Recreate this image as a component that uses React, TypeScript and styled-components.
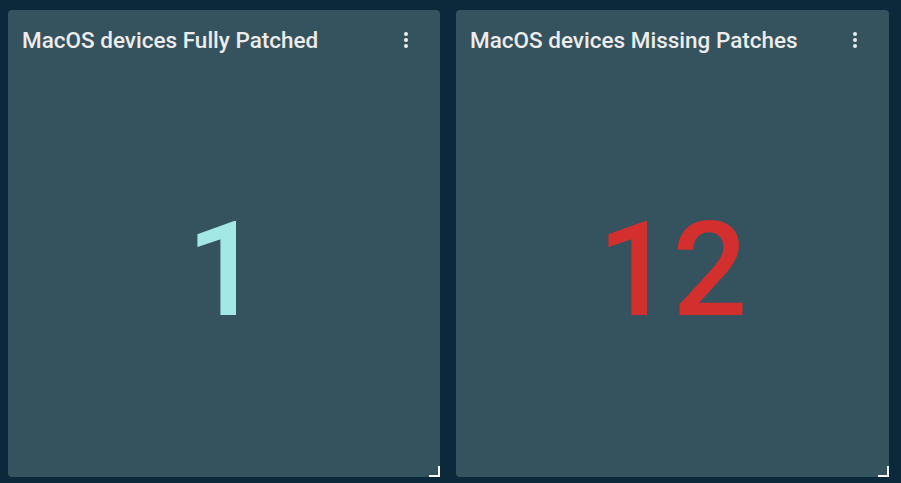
import React from 'react';
import styled, { createGlobalStyle } from 'styled-components';

const GlobalStyle = createGlobalStyle`
  html, body {
    margin: 0;
    padding: 0;
    background: #0b293a;
  }
  body {
    font-family: Roboto, "Liberation Sans", sans-serif;
  }
`;

const Board = styled.div`
  width: 901px;
  height: 483px;
  box-sizing: border-box;
  padding: 10px 12px 6px 8px;
  display: grid;
  grid-template-columns: 432px 433px;
  column-gap: 16px;
  background: #0b293a;
`;

const Card = styled.div`
  position: relative;
  display: flex;
  flex-direction: column;
  background: #35535e;
  border-radius: 4px;
`;

const Header = styled.div`
  display: flex;
  align-items: center;
  justify-content: space-between;
  height: 60px;
  padding: 0 24px 0 14px;
`;

const Title = styled.h2`
  margin: 0;
  font-size: 22.5px;
  font-weight: 500;
  color: #ececec;
  letter-spacing: 0;
`;

const MenuButton = styled.button`
  display: flex;
  align-items: center;
  justify-content: center;
  width: 20px;
  height: 24px;
  padding: 0;
  border: none;
  background: transparent;
  color: #ececec;
  cursor: pointer;
`;

const Body = styled.div`
  flex: 1;
  display: flex;
  align-items: center;
  justify-content: center;
  padding-bottom: 8px;
`;

const Value = styled.span<{ $color: string }>`
  font-size: 132px;
  font-weight: 500;
  line-height: 1;
  color: ${({ $color }) => $color};
`;

const ResizeHandle = styled.div`
  position: absolute;
  right: 0;
  bottom: 0;
  width: 11px;
  height: 11px;
  border-right: 2px solid #ffffff;
  border-bottom: 2px solid #ffffff;
  box-sizing: border-box;
`;

function Kebab() {
  return (
    <svg width="4" height="16" viewBox="0 0 4 16" fill="currentColor">
      <circle cx="2" cy="2" r="2" />
      <circle cx="2" cy="8" r="2" />
      <circle cx="2" cy="14" r="2" />
    </svg>
  );
}

interface ITile {
  title: string;
  value: number;
  color: string;
}

const tiles: ITile[] = [
  { title: 'MacOS devices Fully Patched', value: 1, color: '#a3e8e4' },
  { title: 'MacOS devices Missing Patches', value: 12, color: '#d32f2f' },
];

function Tile({ title, value, color }: ITile) {
  return (
    <Card>
      <Header>
        <Title>{title}</Title>
        <MenuButton aria-label="menu">
          <Kebab />
        </MenuButton>
      </Header>
      <Body>
        <Value $color={color}>{value}</Value>
      </Body>
      <ResizeHandle />
    </Card>
  );
}

export default function App() {
  return (
    <>
      <GlobalStyle />
      <Board>
        {tiles.map((t) => (
          <Tile key={t.title} {...t} />
        ))}
      </Board>
    </>
  );
}
